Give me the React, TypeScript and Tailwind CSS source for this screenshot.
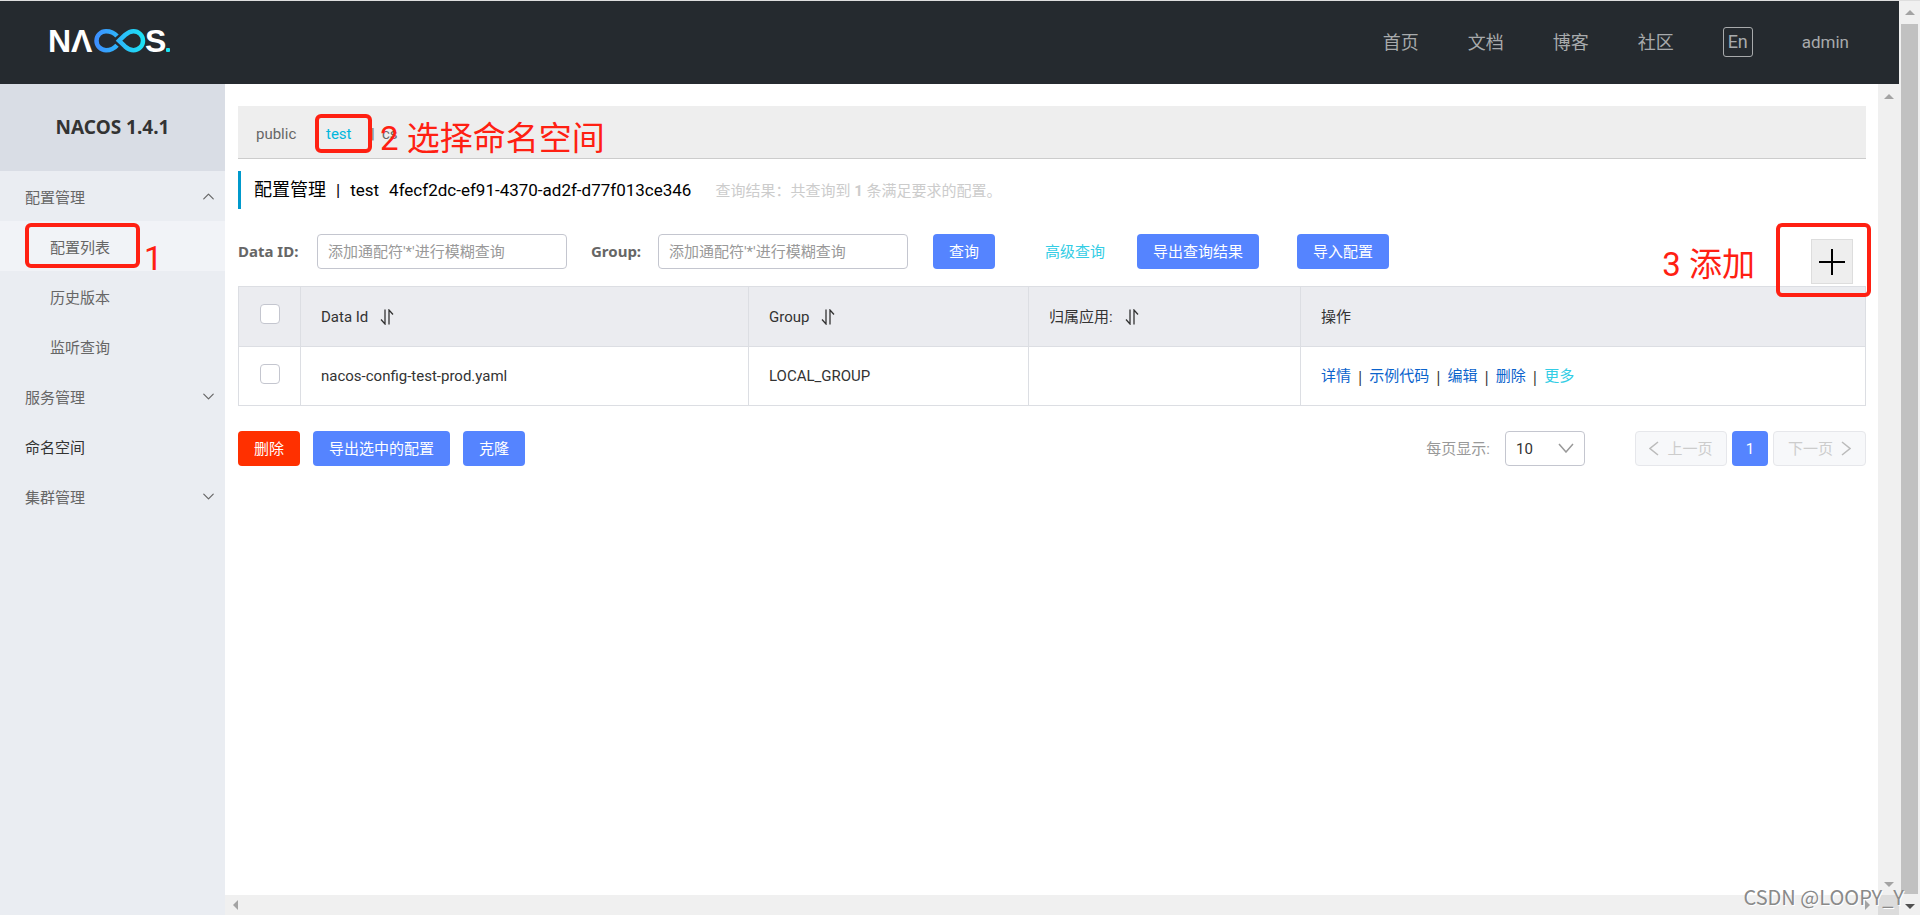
import React, { useState } from 'react';
import { ChevronDown, ChevronUp } from 'lucide-react';

const NAV_LINKS = ['首页', '文档', '博客', '社区'];

interface MenuItem {
  label: string;
  open?: boolean;
  leaf?: boolean;
  children?: string[];
}

const MENU: MenuItem[] = [
  { label: '配置管理', open: true, children: ['配置列表', '历史版本', '监听查询'] },
  { label: '服务管理' },
  { label: '命名空间', leaf: true },
  { label: '集群管理' },
];

const ROWS = [{ dataId: 'nacos-config-test-prod.yaml', group: 'LOCAL_GROUP', app: '' }];

const Logo: React.FC = () => (
  <svg width="122" height="26" viewBox="0 0 122 26" role="img" aria-label="NACOS" className="overflow-visible">
    <defs>
      <linearGradient id="loop" gradientUnits="userSpaceOnUse" x1="44" y1="0" x2="95" y2="0">
        <stop offset="0" stopColor="#3f8cff" />
        <stop offset="1" stopColor="#1be4f5" />
      </linearGradient>
    </defs>
    <g fill="#fff" className="font-['Liberation_Sans',sans-serif] text-[32px] font-bold">
      <text x="-2" y="24">N</text>
      <text x="21" y="24">Λ</text>
      <text x="95" y="24">S</text>
    </g>
    <g fill="none" stroke="url(#loop)" strokeWidth="4.500">
      <path d="M67 8C64 4.500 60 3.200 56 3.200a9.500 9.500 0 0 0 0 19c4 0 8-1.500 11-5" />
      <path d="M69 12.700L75 7C78 4.500 80 3.200 83.500 3.200a9.500 9.500 0 0 1 0 19c-3.500 0-5.500-1.300-8.500-3.800z" />
    </g>
    <rect x="116" y="20" width="4" height="4" rx="1" fill="#1be4f5" />
  </svg>
);

const SortIcon: React.FC = () => (
  <svg width="14" height="16" viewBox="0 0 14 16" fill="none" stroke="#333" strokeWidth="1.300">
    <path d="M5 0.500V15L1 10.500M9 15.500V1L13 5.500" />
  </svg>
);

// Hand-drawn looking frame used for the step hints
const Frame: React.FC<{ className: string }> = ({ className }) => (
  <span className={`absolute border-4 border-[#ff2012] rounded-md pointer-events-none z-10 ${className}`} />
);

const Hint: React.FC<{ className: string; children: React.ReactNode }> = ({ className, children }) => (
  <span className={`absolute whitespace-nowrap text-[33px] leading-10 text-[#ff2012] pointer-events-none z-10 ${className}`}>
    {children}
  </span>
);

const Arrow: React.FC<{ dir: 'up' | 'down' | 'left' | 'right'; dark?: boolean }> = ({ dir, dark }) => {
  const points = {
    up: '0,7 5,2 10,7',
    down: '0,3 5,8 10,3',
    left: '7,0 2,5 7,10',
    right: '3,0 8,5 3,10',
  };
  return (
    <svg width="10" height="10" viewBox="0 0 10 10">
      <polygon points={points[dir]} fill={dark ? '#505050' : '#a3a3a3'} />
    </svg>
  );
};

const PageArrow: React.FC<{ next?: boolean }> = ({ next }) => (
  <svg width="10" height="15" viewBox="0 0 10 15" fill="none" stroke="#bbb" strokeWidth="1.500">
    <path d={next ? 'M1 1L9 7.500L1 14' : 'M9 1L1 7.500L9 14'} />
  </svg>
);

const Button: React.FC<{ children: React.ReactNode; danger?: boolean; className?: string }> = ({ children, danger, className = '' }) => (
  <button
    type="button"
    className={`h-[35px] px-4 rounded-[4px] text-white whitespace-nowrap ${danger ? 'bg-[#ff3000]' : 'bg-[#5584ff]'} ${className}`}
  >
    {children}
  </button>
);

const Header: React.FC = () => (
  <header className="h-[84px] shrink-0 border-t border-[#dedede] bg-[#252a2f] flex items-center justify-between px-[50px]">
    <a href="#" className="block mb-1"><Logo /></a>
    <nav className="flex items-center gap-[49px] text-lg text-[#a8aaac]">
      {NAV_LINKS.map((text) => (
        <a key={text} href="#">{text}</a>
      ))}
      <button type="button" className="w-[30px] h-[30px] mb-px border border-[#a8aaac] rounded-[3px] leading-7">En</button>
      <a href="#" className="text-[17px]">admin</a>
    </nav>
  </header>
);

const Sidebar: React.FC = () => (
  <aside className="w-[225px] shrink-0 bg-[#eaedf2] text-[#666]">
    <h1 className="h-[87px] pb-[2px] bg-[#d9dde5] flex items-center justify-center font-['Noto_Sans',sans-serif] text-[19px] font-bold text-[#333]">
      NACOS 1.4.1
    </h1>
    <ul>
      {MENU.map((item) => (
        <li key={item.label}>
          <a href="#" className={`h-[50px] pl-[25px] pr-[7px] flex items-center justify-between ${item.leaf ? 'text-[#333]' : ''}`}>
            <span className="pt-1">{item.label}</span>
            {!item.leaf && (item.open
              ? <ChevronUp size={19} strokeWidth={1.5} />
              : <ChevronDown size={19} strokeWidth={1.5} />)}
          </a>
          {item.children && (
            <ul>
              {item.children.map((child, i) => (
                <li key={child} className={`relative ${i === 0 ? 'bg-[#f1f3f7]' : ''}`}>
                  <a href="#" className="h-[50px] pl-[50px] pt-1 flex items-center">{child}</a>
                  {i === 0 && (
                    <>
                      <Frame className="left-[25px] top-[2px] w-[115px] h-[45px]" />
                      <Hint className="left-[144px] top-[18px]">1</Hint>
                    </>
                  )}
                </li>
              ))}
            </ul>
          )}
        </li>
      ))}
    </ul>
  </aside>
);

const SearchBar: React.FC = () => (
  <form className="relative mt-[25px] flex items-center text-[#666]">
    <label htmlFor="dataId" className="w-[79px] pb-[2px] font-['Noto_Sans',sans-serif] font-bold">Data ID:</label>
    <input
      id="dataId"
      placeholder="添加通配符'*'进行模糊查询"
      className="w-[250px] h-[35px] px-[10px] border border-[#c4c6cf] rounded-[4px] outline-none placeholder-[#999]"
    />
    <label htmlFor="group" className="ml-6 w-[67px] pb-[2px] font-['Noto_Sans',sans-serif] font-bold">Group:</label>
    <input
      id="group"
      placeholder="添加通配符'*'进行模糊查询"
      className="w-[250px] h-[35px] px-[10px] border border-[#c4c6cf] rounded-[4px] outline-none placeholder-[#999]"
    />
    <Button className="ml-[25px]">查询</Button>
    <button type="button" className="ml-[50px] text-[#33cde5]">高级查询</button>
    <Button className="ml-8">导出查询结果</Button>
    <Button className="ml-[38px]">导入配置</Button>
    <div className="absolute right-[13px] top-[5px]">
      <button type="button" aria-label="添加" className="w-[42px] h-[45px] border border-[#ddd] bg-[#eee] flex items-center justify-center">
        <svg width="26" height="26" viewBox="0 0 26 26" stroke="#000" strokeWidth="2">
          <path d="M13 0V26M0 13H26" />
        </svg>
      </button>
      <Frame className="-left-[35px] -top-[16px] w-[95px] h-[74px]" />
      <Hint className="right-[98px] top-[6px]">3 添加</Hint>
    </div>
  </form>
);

const CheckBox: React.FC<{ label: string; checked: boolean; onChange: () => void }> = ({ label, checked, onChange }) => (
  <input
    type="checkbox"
    aria-label={label}
    checked={checked}
    onChange={onChange}
    className="block mx-auto mb-[5px] w-5 h-5 appearance-none border border-[#c4c6cf] rounded-[4px] bg-white checked:bg-[#5584ff]"
  />
);

const Divider: React.FC = () => <span className="font-['Noto_Sans',sans-serif] text-[#333]">|</span>;

const ConfigTable: React.FC = () => {
  const [checked, setChecked] = useState(false);
  const toggle = () => setChecked(!checked);
  const cell = 'border border-[#dcdee3] px-5 text-left font-normal';

  return (
    <table className="mt-[17px] w-full table-fixed border-collapse text-[#333]">
      <thead className="bg-[#ebecf0]">
        <tr className="h-[60px]">
          <th className="w-[62px] border border-[#dcdee3]"><CheckBox label="全选" checked={checked} onChange={toggle} /></th>
          <th className={`${cell} w-[448px]`}>
            <span className="flex items-center gap-3">Data Id <SortIcon /></span>
          </th>
          <th className={`${cell} w-[280px]`}>
            <span className="flex items-center gap-3">Group <SortIcon /></span>
          </th>
          <th className={`${cell} w-[272px]`}>
            <span className="flex items-center gap-3">归属应用: <SortIcon /></span>
          </th>
          <th className={cell}>操作</th>
        </tr>
      </thead>
      <tbody>
        {ROWS.map((row) => (
          <tr key={row.dataId} className="h-[59px]">
            <td className="border border-[#dcdee3]"><CheckBox label={row.dataId} checked={checked} onChange={toggle} /></td>
            <td className={cell}>{row.dataId}</td>
            <td className={cell}>{row.group}</td>
            <td className={cell}>{row.app}</td>
            <td className={cell}>
              <span className="flex items-center gap-[5px] text-[#0b63cc]">
                <a href="#">详情</a>
                <Divider />
                <a href="#">示例代码</a>
                <Divider />
                <a href="#">编辑</a>
                <Divider />
                <a href="#">删除</a>
                <Divider />
                <a href="#" className="text-[#33cde5]">更多</a>
              </span>
            </td>
          </tr>
        ))}
      </tbody>
    </table>
  );
};

const TableFooter: React.FC = () => (
  <div className="mt-[25px] flex items-center justify-between">
    <div className="flex gap-[13px]">
      <Button danger>删除</Button>
      <Button>导出选中的配置</Button>
      <Button>克隆</Button>
    </div>
    <div className="flex items-center">
      <label htmlFor="pageSize" className="mr-[15px] text-[#999]">每页显示:</label>
      <div className="relative mr-[50px]">
        <select id="pageSize" defaultValue="10" className="w-20 h-[35px] pl-[10px] appearance-none border border-[#c4c6cf] rounded-[4px] bg-white text-[#333]">
          <option>10</option>
          <option>20</option>
          <option>30</option>
        </select>
        <svg width="16" height="10" viewBox="0 0 16 10" fill="none" stroke="#999" strokeWidth="1.500" className="absolute right-[11px] top-[12px] pointer-events-none">
          <path d="M1 1L8 9L15 1" />
        </svg>
      </div>
      <div className="flex gap-[5px]">
        <button type="button" disabled className="w-[92px] h-[35px] flex items-center justify-center gap-2 border border-[#e6e7eb] rounded-[4px] bg-[#f7f8fa] text-[#ccc]">
          <PageArrow />上一页
        </button>
        <button type="button" className="w-9 h-[35px] rounded-[4px] bg-[#5584ff] text-white">1</button>
        <button type="button" disabled className="w-[93px] h-[35px] flex items-center justify-center gap-2 border border-[#e6e7eb] rounded-[4px] bg-[#f7f8fa] text-[#ccc]">
          下一页<PageArrow next />
        </button>
      </div>
    </div>
  </div>
);

const Content: React.FC = () => (
  <main className="flex-1 min-w-0 bg-white pt-[22px] pl-[13px] pr-3">
    <div className="relative h-[53px] border-b border-[#ccc] bg-[#eee] flex items-center pl-[18px] pt-[3px] text-[#666]">
      <a href="#" className="w-[70px]">public</a>
      <a href="#" className="w-[45px] text-[#00b7dd]">test</a>
      <span className="w-[11px]">|</span>
      <a href="#">cs</a>
      <Frame className="left-[77px] top-[8px] w-[57px] h-[39px]" />
      <Hint className="left-[142px] top-[13px]">2 选择命名空间</Hint>
    </div>
    <div className="mt-3 h-[38px] border-l-[3px] border-[#0099cc] pl-[13px] flex items-center">
      <h2 className="flex items-center gap-[10px] text-[17px] text-black">
        <span className="text-lg">配置管理</span>
        <span>|</span>
        <span>test</span>
        <span>4fecf2dc-ef91-4370-ad2f-d77f013ce346</span>
      </h2>
      <span className="ml-6 pt-[2px] text-[#ccc]">
        查询结果：共查询到 <strong>1</strong> 条满足要求的配置。
      </span>
    </div>
    <SearchBar />
    <ConfigTable />
    <TableFooter />
  </main>
);

const App: React.FC = () => (
  <div className="relative h-screen flex overflow-hidden bg-white font-[Roboto,'Noto_Sans_CJK_SC',sans-serif] text-[15px] leading-5">
    <div className="flex-1 min-w-0 flex flex-col">
      <Header />
      <div className="flex-1 min-h-0 flex">
        <Sidebar />
        <div className="flex-1 min-w-0 flex flex-col">
          <div className="flex-1 min-h-0 flex">
            <Content />
            <div className="w-[21px] shrink-0 bg-[#f0f0f0] flex flex-col items-center justify-between pt-2 pb-[6px]">
              <Arrow dir="up" />
              <Arrow dir="down" />
            </div>
          </div>
          <div className="h-5 shrink-0 flex bg-[#f0f0f0]">
            <div className="flex-1 flex items-center justify-between px-[6px]">
              <Arrow dir="left" />
              <Arrow dir="right" />
            </div>
            <div className="w-[21px] bg-[#dcdcdc]" />
          </div>
        </div>
      </div>
    </div>
    <div className="w-[21px] shrink-0 border-t border-[#dedede] bg-[#f0f0f0] flex flex-col items-center pt-[7px] pb-1">
      <Arrow dir="up" />
      <div className="mt-[6px] mb-[7px] w-[17px] flex-1 bg-[#c1c1c1]" />
      <Arrow dir="down" dark />
    </div>
    <span className="absolute right-4 bottom-[6px] font-['Noto_Sans_CJK_SC',sans-serif] text-[20px] leading-6 text-[#8a8a8a] [text-shadow:1px_1px_0_#fff]">
      CSDN @LOOPY_Y
    </span>
  </div>
);

export default App;
